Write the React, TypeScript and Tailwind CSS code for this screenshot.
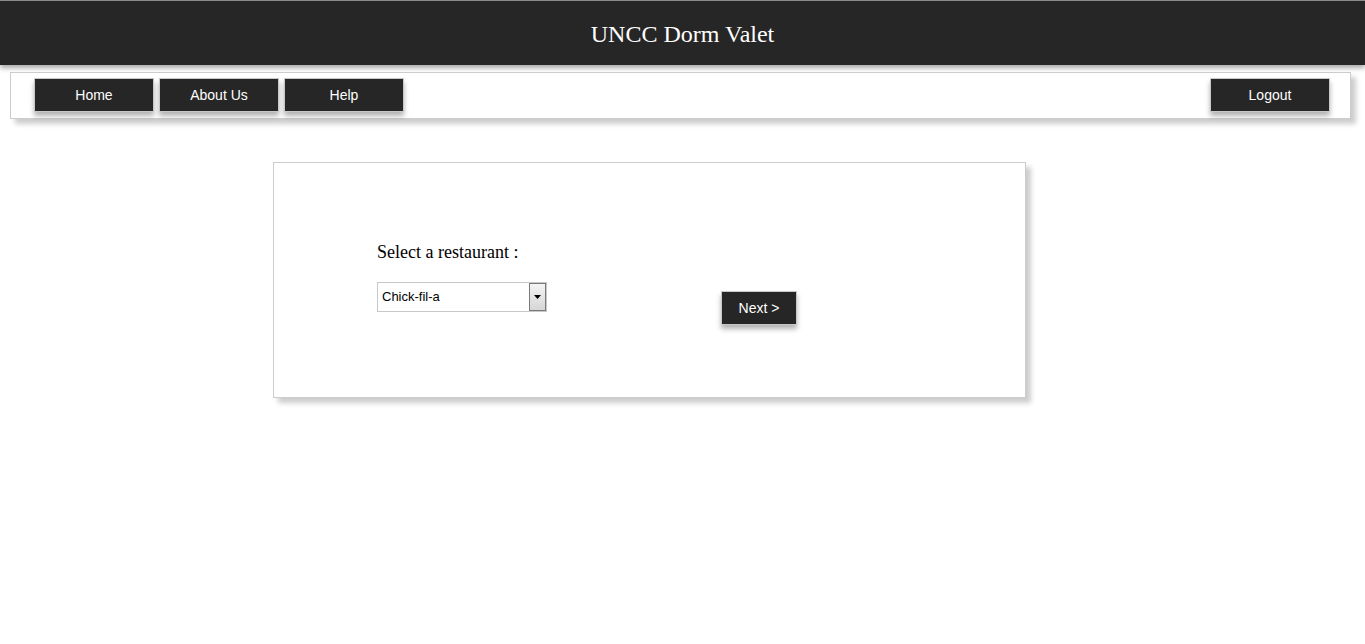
import React from 'react';

const NavButton: React.FC<{ label: string }> = ({ label }) => (
  <button className="w-[120px] h-[34px] bg-[#262626] border border-[#c8c8c8] text-white text-[14px] font-['Liberation_Sans',Arial,sans-serif] shadow-[0_4px_5px_rgba(0,0,0,0.3)]">
    {label}
  </button>
);

const App: React.FC = () => {
  return (
    <div className="min-h-[644px] bg-white font-['Liberation_Sans',Arial,sans-serif]">
      <header className="h-[65px] bg-[#262626] border-t border-[#8a8a8a] flex items-center justify-center shadow-[0_3px_5px_rgba(0,0,0,0.35)]">
        <h1 className="text-white text-[24px] font-['Liberation_Serif','Times_New_Roman',serif] pt-[1px]">UNCC Dorm Valet</h1>
      </header>

      <nav className="mt-[7px] ml-[10px] mr-[14px] h-[47px] border border-[#cccccc] bg-white shadow-[5px_5px_5px_rgba(0,0,0,0.2)] flex items-start justify-between pl-[23px] pr-[20px] pt-[5px]">
        <div className="flex gap-[5px]">
          <NavButton label="Home" />
          <NavButton label="About Us" />
          <NavButton label="Help" />
        </div>
        <NavButton label="Logout" />
      </nav>

      <main className="mt-[43px] ml-[20%] w-[753px] h-[236px] border border-[#cccccc] bg-white shadow-[5px_5px_5px_rgba(0,0,0,0.2)] pl-[103px] pt-[79px]">
        <p className="text-[18px] leading-[21px] text-black font-['Liberation_Serif','Times_New_Roman',serif]">
          Select a restaurant :
        </p>
        <div className="mt-[19px] flex items-start">
          <div className="relative w-[170px] h-[30px]">
            <select className="appearance-none w-full h-full border border-[#c8c8c8] bg-white pl-[4px] text-[13px] text-black font-['Liberation_Sans',Arial,sans-serif] outline-none">
              <option>Chick-fil-a</option>
            </select>
            <div className="absolute right-[1px] top-[1px] w-[17px] h-[28px] border border-[#7a7a7a] bg-gradient-to-b from-[#f4f4f4] to-[#d6d6d6] flex items-center justify-center pointer-events-none">
              <svg width="7" height="4" viewBox="0 0 7 4">
                <path d="M0 0h7L3.5 4z" fill="#000" />
              </svg>
            </div>
          </div>
          <button className="ml-[174px] mt-[9px] w-[76px] h-[34px] bg-[#262626] border border-[#c8c8c8] text-white text-[14px] shadow-[0_4px_5px_rgba(0,0,0,0.3)]">
            Next &gt;
          </button>
        </div>
      </main>
    </div>
  );
};

export default App;
